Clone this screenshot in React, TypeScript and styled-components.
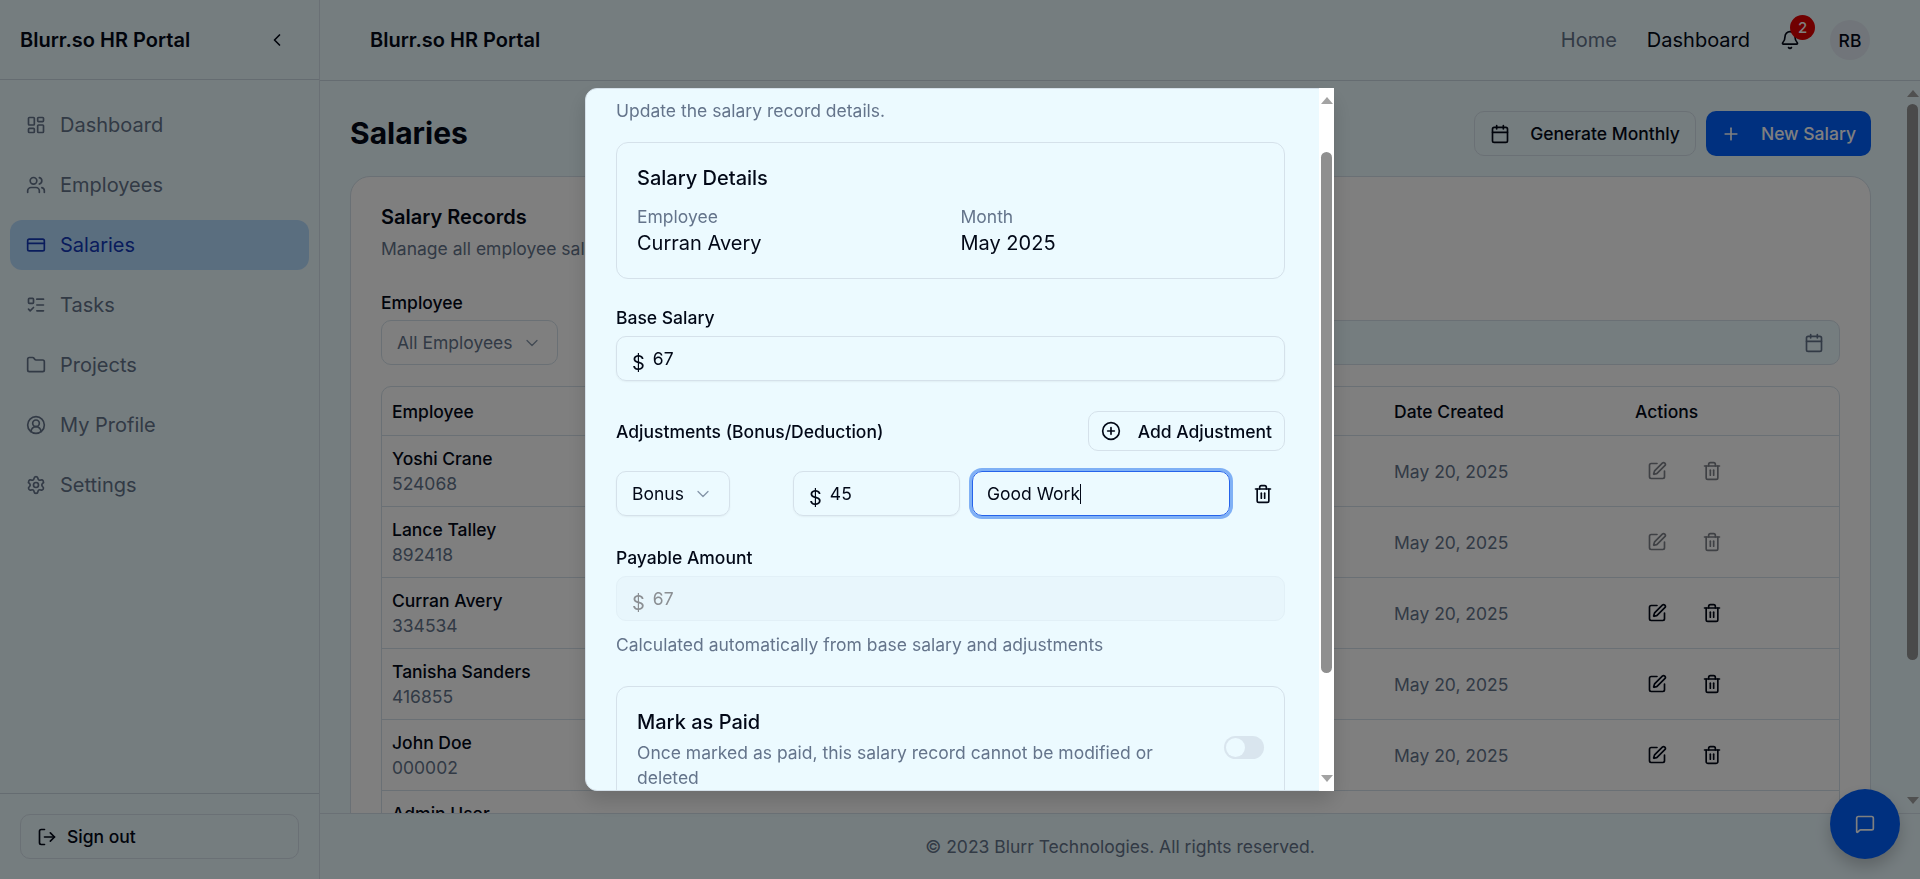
import React from "react";
import styled, { createGlobalStyle } from "styled-components";
import {
  Bell,
  Calendar,
  ChevronDown,
  ChevronLeft,
  CircleUserRound,
  CirclePlus,
  CreditCard,
  Folder,
  LayoutDashboard,
  ListTodo,
  LogOut,
  MessageSquare,
  Plus,
  Settings,
  SquarePen,
  Trash2,
  Users,
} from "lucide-react";

const Global = createGlobalStyle`
  html, body { margin: 0; height: 100%; overflow: hidden; }
  body { font-family: Inter, "Liberation Sans", sans-serif; color: #020817; background: #ebfaff; }
  #root { height: 100%; }
  * { box-sizing: border-box; }
`;

const Shell = styled.div`
  display: flex;
  height: 100vh;
`;

const Sidebar = styled.aside`
  width: 320px;
  flex: none;
  display: flex;
  flex-direction: column;
  border-right: 1px solid #d5e1ea;
`;

const SideHead = styled.div`
  height: 80px;
  flex: none;
  display: flex;
  align-items: center;
  justify-content: space-between;
  padding: 0 32px 0 20px;
  border-bottom: 1px solid #cbd8e2;
`;

const Brand = styled.div`
  font-size: 20px;
  font-weight: 600;
  line-height: 24px;
`;

const Nav = styled.nav`
  flex: 1;
  display: flex;
  flex-direction: column;
  gap: 10px;
  padding: 20px 10px;
`;

const NavItem = styled.div<{ $active?: boolean }>`
  height: 50px;
  display: flex;
  align-items: center;
  gap: 15px;
  padding: 0 15px 0 16px;
  border-radius: 12px;
  font-size: 20px;
  color: ${(p) => (p.$active ? "#1338b8" : "#64748b")};
  background: ${(p) => (p.$active ? "#b5dcff" : "transparent")};
  svg { flex: none; margin-right: -1px; }
`;

const SideFoot = styled.div`
  height: 86px;
  flex: none;
  padding: 20px 20px 0;
  border-top: 1px solid #cbd8e2;
`;

const SignOut = styled.div`
  height: 45px;
  width: 279px;
  display: flex;
  align-items: center;
  gap: 10px;
  padding: 0 16px;
  border: 1px solid #d5e1ea;
  border-radius: 10px;
  font-size: 17.5px;
  font-weight: 500;
`;

const Column = styled.div`
  flex: 1;
  min-width: 0;
  display: flex;
  flex-direction: column;
`;

const Header = styled.header`
  height: 81px;
  flex: none;
  display: flex;
  align-items: center;
  padding: 0 50px;
  border-bottom: 1px solid #cbd8e2;
`;

const HeaderNav = styled.div`
  margin-left: auto;
  display: flex;
  align-items: center;
`;

const HeaderLink = styled.span<{ $current?: boolean }>`
  font-size: 20px;
  margin-right: 30px;
  color: ${(p) => (p.$current ? "#020817" : "#64748b")};
`;

const BellBox = styled.div`
  position: relative;
  width: 20px;
  height: 20px;
  margin-right: 30px;
`;

const Badge = styled.span`
  position: absolute;
  left: 10px;
  top: -15px;
  width: 25px;
  height: 25px;
  border-radius: 50%;
  background: #e00000;
  color: #fff;
  font-size: 15px;
  font-weight: 500;
  display: flex;
  align-items: center;
  justify-content: center;
`;

const Avatar = styled.div`
  width: 40px;
  height: 40px;
  border-radius: 50%;
  background: #e2ebf4;
  display: flex;
  align-items: center;
  justify-content: center;
  font-size: 17.5px;
  font-weight: 500;
`;

const MainRow = styled.main`
  flex: 1;
  min-height: 0;
  display: flex;
  overflow: hidden;
`;

const Content = styled.div`
  flex: 1;
  min-width: 0;
  overflow: hidden;
  padding: 30px 34px 0 30px;
`;

const PageHead = styled.div`
  display: flex;
  align-items: center;
  justify-content: space-between;
  height: 45px;
  margin-bottom: 20px;
`;

const PageTitle = styled.h1`
  margin: 0;
  font-size: 30px;
  font-weight: 700;
  line-height: 45px;
`;

const Actions = styled.div`
  display: flex;
  gap: 10px;
`;

const OutlineButton = styled.div`
  height: 45px;
  display: flex;
  align-items: center;
  gap: 20px;
  padding: 0 15px;
  border: 1px solid #d5e1ea;
  border-radius: 10px;
  font-size: 17.5px;
  font-weight: 500;
`;

const PrimaryButton = styled(OutlineButton)`
  border: 0;
  background: #0060ff;
  color: #fff;
`;

const Card = styled.section`
  background: #fff;
  border: 1px solid #d5e1ea;
  border-radius: 20px;
  padding: 28px 30px 0;
  height: 700px;
`;

const CardTitle = styled.div`
  font-size: 20px;
  font-weight: 600;
  line-height: 24px;
`;

const CardDesc = styled.div`
  font-size: 17.5px;
  line-height: 25px;
  color: #64748b;
  margin-top: 7px;
`;

const FilterRow = styled.div`
  display: flex;
  gap: 40px;
  margin-top: 29px;
`;

const Filter = styled.div<{ $grow?: boolean }>`
  flex: ${(p) => (p.$grow ? "1" : "none")};
  display: flex;
  flex-direction: column;
  gap: 5px;
`;

const FilterLabel = styled.div`
  font-size: 17.5px;
  font-weight: 500;
  line-height: 25px;
  height: 25px;
`;

const SelectBox = styled.div`
  height: 45px;
  width: 177px;
  display: flex;
  align-items: center;
  justify-content: space-between;
  padding: 0 15px;
  border: 1px solid #d5e1ea;
  border-radius: 10px;
  font-size: 17.5px;
  color: #64748b;
  svg { flex: none; color: #8494a8; }
`;

const DateBox = styled.div`
  height: 45px;
  display: flex;
  align-items: center;
  justify-content: flex-end;
  padding: 0 15px;
  border: 1px solid #d5e1ea;
  border-radius: 10px;
  background: #ebfaff;
  color: #64748b;
`;

const Table = styled.div`
  margin-top: 21px;
  border: 1px solid #d5e1ea;
  border-radius: 10px 10px 0 0;
`;

const TableRow = styled.div<{ $head?: boolean }>`
  display: grid;
  grid-template-columns: 1fr 241px 214px;
  align-items: center;
  height: ${(p) => (p.$head ? "49px" : "71px")};
  padding-top: ${(p) => (p.$head ? "1px" : "0")};
  border-bottom: 1px solid #d5e1ea;
`;

const HeadCell = styled.div`
  padding: 0 10px;
  font-size: 17.5px;
  font-weight: 500;
`;

const NameCell = styled.div`
  padding: 0 10px;
  display: flex;
  flex-direction: column;
`;

const Name = styled.div`
  font-size: 17.5px;
  font-weight: 500;
  line-height: 25px;
`;

const Code = styled.div`
  font-size: 17.5px;
  line-height: 25px;
  color: #64748b;
`;

const DateCell = styled.div`
  padding: 0 10px;
  font-size: 17.5px;
  color: #64748b;
`;

const ActionCell = styled.div<{ $disabled?: boolean }>`
  display: flex;
  gap: 35px;
  padding-left: 22px;
  opacity: ${(p) => (p.$disabled ? 0.5 : 1)};
`;

const Scrollbar = styled.div`
  width: 15px;
  flex: none;
  display: flex;
  flex-direction: column;
  align-items: center;
  background: #ebfaff;
`;

const ModalScrollbar = styled(Scrollbar)`
  background: #fff;
  margin: -1px -1px -1px 0;
`;

const ArrowUp = styled.span<{ $color: string; $top: number }>`
  width: 0;
  height: 0;
  flex: none;
  margin-top: ${(p) => p.$top}px;
  border-left: 6px solid transparent;
  border-right: 6px solid transparent;
  border-bottom: 7px solid ${(p) => p.$color};
`;

const ArrowDown = styled.span<{ $color: string }>`
  width: 0;
  height: 0;
  flex: none;
  border-left: 6px solid transparent;
  border-right: 6px solid transparent;
  border-top: 7px solid ${(p) => p.$color};
`;

const Thumb = styled.div<{ $color: string; $h: number; $mt: number; $mb: number }>`
  width: 11px;
  height: ${(p) => p.$h}px;
  margin: ${(p) => p.$mt}px 0 ${(p) => p.$mb}px;
  border-radius: 6px;
  background: ${(p) => p.$color};
  flex: none;
`;

const Footer = styled.footer`
  height: 66px;
  flex: none;
  display: flex;
  align-items: center;
  justify-content: center;
  border-top: 1px solid #d5e1ea;
  font-size: 17.5px;
  color: #64748b;
`;

const Fab = styled.div`
  position: fixed;
  right: 20px;
  bottom: 20px;
  width: 70px;
  height: 70px;
  border-radius: 50%;
  background: #0060ff;
  color: #fff;
  display: flex;
  align-items: center;
  justify-content: center;
  box-shadow: 0 8px 16px rgba(0, 0, 0, 0.2);
`;

const Overlay = styled.div`
  position: fixed;
  inset: 0;
  background: rgba(0, 0, 0, 0.5);
  display: flex;
  align-items: center;
  justify-content: center;
`;

const Modal = styled.div`
  width: 749px;
  height: 703px;
  margin-right: 1px;
  display: flex;
  background: #ecfaff;
  border: 1px solid #d5e1ea;
  border-radius: 12px;
  box-shadow: 0 10px 20px rgba(0, 0, 0, 0.15);
`;

const ModalBody = styled.div`
  flex: 1;
  min-width: 0;
  overflow: hidden;
  border-radius: 11px 0 0 11px;
  padding: 9px 34px 0 30px;
`;

const ModalDesc = styled.div`
  font-size: 17.5px;
  line-height: 25px;
  color: #64748b;
`;

const DetailsCard = styled.div`
  margin-top: 19px;
  height: 137px;
  padding: 23px 20px 0;
  border: 1px solid #d5e1ea;
  border-radius: 12px;
`;

const DetailsTitle = styled.div`
  font-size: 20px;
  font-weight: 500;
  line-height: 24px;
`;

const DetailsGrid = styled.div`
  display: grid;
  grid-template-columns: 1fr 1fr;
  column-gap: 20px;
  margin-top: 14px;
`;

const DetailLabel = styled.div`
  font-size: 17.5px;
  line-height: 25px;
  color: #64748b;
`;

const DetailValue = styled.div`
  font-size: 20px;
  line-height: 28px;
`;

const FieldLabel = styled.div<{ $mt: number }>`
  margin-top: ${(p) => p.$mt}px;
  font-size: 17.5px;
  font-weight: 500;
  line-height: 25px;
`;

const InputBox = styled.div<{ $muted?: boolean; $width?: number }>`
  height: 45px;
  width: ${(p) => (p.$width ? `${p.$width}px` : "100%")};
  flex: none;
  margin-top: ${(p) => (p.$width ? "0" : "6px")};
  display: flex;
  align-items: center;
  padding: 0 15px;
  border: 1px solid ${(p) => (p.$muted ? "#e2f0f7" : "#d5e1ea")};
  border-radius: 10px;
  background: ${(p) => (p.$muted ? "#e8f6fc" : "transparent")};
  box-shadow: ${(p) => (p.$muted ? "none" : "0 1px 2px rgba(0,0,0,.05)")};
  color: ${(p) => (p.$muted ? "#8b8f93" : "#020817")};
  font-size: 17.5px;
`;

const Dollar = styled.span`
  font-size: 20px;
  line-height: 24px;
  margin-top: 9px;
  margin-right: 8px;
`;

const AdjustHead = styled.div`
  display: flex;
  align-items: center;
  justify-content: space-between;
  margin-top: 30px;
`;

const AdjustLabel = styled.div`
  font-size: 17.5px;
  font-weight: 500;
`;

const AddButton = styled.div`
  height: 40px;
  display: flex;
  align-items: center;
  gap: 17px;
  padding: 0 12px;
  border: 1px solid #d5e1ea;
  border-radius: 10px;
  font-size: 17.5px;
  font-weight: 500;
`;

const AdjustRow = styled.div`
  display: flex;
  align-items: center;
  margin-top: 20px;
`;

const TypeSelect = styled.div`
  width: 114px;
  height: 45px;
  flex: none;
  margin-right: 63px;
  display: flex;
  align-items: center;
  gap: 9px;
  padding: 0 15px;
  border: 1px solid #d5e1ea;
  border-radius: 10px;
  box-shadow: 0 1px 2px rgba(0, 0, 0, 0.05);
  font-size: 17.5px;
  svg { flex: none; color: #8494a8; }
`;

const FocusInput = styled.div`
  width: 258px;
  height: 45px;
  flex: none;
  margin-left: 12px;
  display: flex;
  align-items: center;
  padding: 0 14px;
  border: 1px solid #2563eb;
  border-radius: 10px;
  box-shadow: 0 0 0 3px #7fb0f5;
  font-size: 17.5px;
`;

const Caret = styled.span`
  width: 1px;
  height: 20px;
  background: #020817;
`;

const RowTrash = styled.div`
  margin-left: 23px;
  display: flex;
`;

const Helper = styled.div`
  margin-top: 11px;
  font-size: 17.5px;
  line-height: 25px;
  color: #64748b;
`;

const PaidCard = styled.div`
  margin-top: 29px;
  height: 160px;
  display: flex;
  align-items: flex-start;
  justify-content: space-between;
  padding: 21px 20px 0;
  border: 1px solid #d5e1ea;
  border-radius: 12px;
`;

const PaidText = styled.div`
  width: 530px;
`;

const PaidTitle = styled.div`
  font-size: 20px;
  font-weight: 500;
  line-height: 28px;
`;

const PaidDesc = styled.div`
  margin-top: 4px;
  font-size: 17.5px;
  line-height: 25px;
  color: #64748b;
`;

const Switch = styled.div`
  width: 40px;
  height: 23px;
  margin-top: 28px;
  padding: 2px;
  flex: none;
  border-radius: 12px;
  background: #d9e5ee;
`;

const SwitchKnob = styled.div`
  width: 19px;
  height: 19px;
  border-radius: 50%;
  background: #ecfaff;
`;

const navItems = [
  { label: "Dashboard", Icon: LayoutDashboard },
  { label: "Employees", Icon: Users },
  { label: "Salaries", Icon: CreditCard, active: true },
  { label: "Tasks", Icon: ListTodo },
  { label: "Projects", Icon: Folder },
  { label: "My Profile", Icon: CircleUserRound },
  { label: "Settings", Icon: Settings },
];

const rows = [
  { name: "Yoshi Crane", code: "524068", disabled: true },
  { name: "Lance Talley", code: "892418", disabled: true },
  { name: "Curran Avery", code: "334534" },
  { name: "Tanisha Sanders", code: "416855" },
  { name: "John Doe", code: "000002" },
  { name: "Admin User", code: "000001" },
];

export default function App() {
  return (
    <>
      <Global />
      <Shell>
        <Sidebar>
          <SideHead>
            <Brand>Blurr.so HR Portal</Brand>
            <ChevronLeft size={20} strokeWidth={2} />
          </SideHead>
          <Nav>
            {navItems.map(({ label, Icon, active }) => (
              <NavItem key={label} $active={active}>
                <Icon size={20} strokeWidth={2} />
                {label}
              </NavItem>
            ))}
          </Nav>
          <SideFoot>
            <SignOut>
              <LogOut size={20} strokeWidth={2} />
              Sign out
            </SignOut>
          </SideFoot>
        </Sidebar>
        <Column>
          <Header>
            <Brand>Blurr.so HR Portal</Brand>
            <HeaderNav>
              <HeaderLink>Home</HeaderLink>
              <HeaderLink $current>Dashboard</HeaderLink>
              <BellBox>
                <Bell size={20} strokeWidth={2} />
                <Badge>2</Badge>
              </BellBox>
              <Avatar>RB</Avatar>
            </HeaderNav>
          </Header>
          <MainRow>
            <Content>
              <PageHead>
                <PageTitle>Salaries</PageTitle>
                <Actions>
                  <OutlineButton>
                    <Calendar size={20} strokeWidth={2} />
                    Generate Monthly
                  </OutlineButton>
                  <PrimaryButton>
                    <Plus size={20} strokeWidth={2} />
                    New Salary
                  </PrimaryButton>
                </Actions>
              </PageHead>
              <Card>
                <CardTitle>Salary Records</CardTitle>
                <CardDesc>Manage all employee salary records</CardDesc>
                <FilterRow>
                  <Filter>
                    <FilterLabel>Employee</FilterLabel>
                    <SelectBox>
                      All Employees
                      <ChevronDown size={20} strokeWidth={1.5} />
                    </SelectBox>
                  </Filter>
                  <Filter $grow>
                    <FilterLabel />
                    <DateBox>
                      <Calendar size={20} strokeWidth={2} />
                    </DateBox>
                  </Filter>
                </FilterRow>
                <Table>
                  <TableRow $head>
                    <HeadCell>Employee</HeadCell>
                    <HeadCell>Date Created</HeadCell>
                    <HeadCell>Actions</HeadCell>
                  </TableRow>
                  {rows.map((r) => (
                    <TableRow key={r.code}>
                      <NameCell>
                        <Name>{r.name}</Name>
                        <Code>{r.code}</Code>
                      </NameCell>
                      <DateCell>May 20, 2025</DateCell>
                      <ActionCell $disabled={r.disabled}>
                        <SquarePen size={20} strokeWidth={2} />
                        <Trash2 size={20} strokeWidth={2} />
                      </ActionCell>
                    </TableRow>
                  ))}
                </Table>
              </Card>
            </Content>
            <Scrollbar>
              <ArrowUp $color="#a0a0a0" $top={9} />
              <Thumb $color="#949494" $h={556} $mt={7} $mb={137} />
              <ArrowDown $color="#a0a0a0" />
            </Scrollbar>
          </MainRow>
          <Footer>© 2023 Blurr Technologies. All rights reserved.</Footer>
        </Column>
      </Shell>
      <Fab>
        <MessageSquare size={20} strokeWidth={2} />
      </Fab>
      <Overlay>
        <Modal>
          <ModalBody>
            <ModalDesc>Update the salary record details.</ModalDesc>
            <DetailsCard>
              <DetailsTitle>Salary Details</DetailsTitle>
              <DetailsGrid>
                <div>
                  <DetailLabel>Employee</DetailLabel>
                  <DetailValue>Curran Avery</DetailValue>
                </div>
                <div>
                  <DetailLabel>Month</DetailLabel>
                  <DetailValue>May 2025</DetailValue>
                </div>
              </DetailsGrid>
            </DetailsCard>
            <FieldLabel $mt={26}>Base Salary</FieldLabel>
            <InputBox>
              <Dollar>$</Dollar>67
            </InputBox>
            <AdjustHead>
              <AdjustLabel>Adjustments (Bonus/Deduction)</AdjustLabel>
              <AddButton>
                <CirclePlus size={20} strokeWidth={2} />
                Add Adjustment
              </AddButton>
            </AdjustHead>
            <AdjustRow>
              <TypeSelect>
                Bonus
                <ChevronDown size={20} strokeWidth={1.5} />
              </TypeSelect>
              <InputBox $width={167}>
                <Dollar>$</Dollar>45
              </InputBox>
              <FocusInput>
                Good Work
                <Caret />
              </FocusInput>
              <RowTrash>
                <Trash2 size={20} strokeWidth={2} />
              </RowTrash>
            </AdjustRow>
            <FieldLabel $mt={29}>Payable Amount</FieldLabel>
            <InputBox $muted>
              <Dollar>$</Dollar>67
            </InputBox>
            <Helper>Calculated automatically from base salary and adjustments</Helper>
            <PaidCard>
              <PaidText>
                <PaidTitle>Mark as Paid</PaidTitle>
                <PaidDesc>
                  Once marked as paid, this salary record cannot be modified or deleted
                </PaidDesc>
              </PaidText>
              <Switch>
                <SwitchKnob />
              </Switch>
            </PaidCard>
          </ModalBody>
          <ModalScrollbar>
            <ArrowUp $color="#a3a3a3" $top={9} />
            <Thumb $color="#8f8f8f" $h={521} $mt={48} $mb={102} />
            <ArrowDown $color="#a3a3a3" />
          </ModalScrollbar>
        </Modal>
      </Overlay>
    </>
  );
}
